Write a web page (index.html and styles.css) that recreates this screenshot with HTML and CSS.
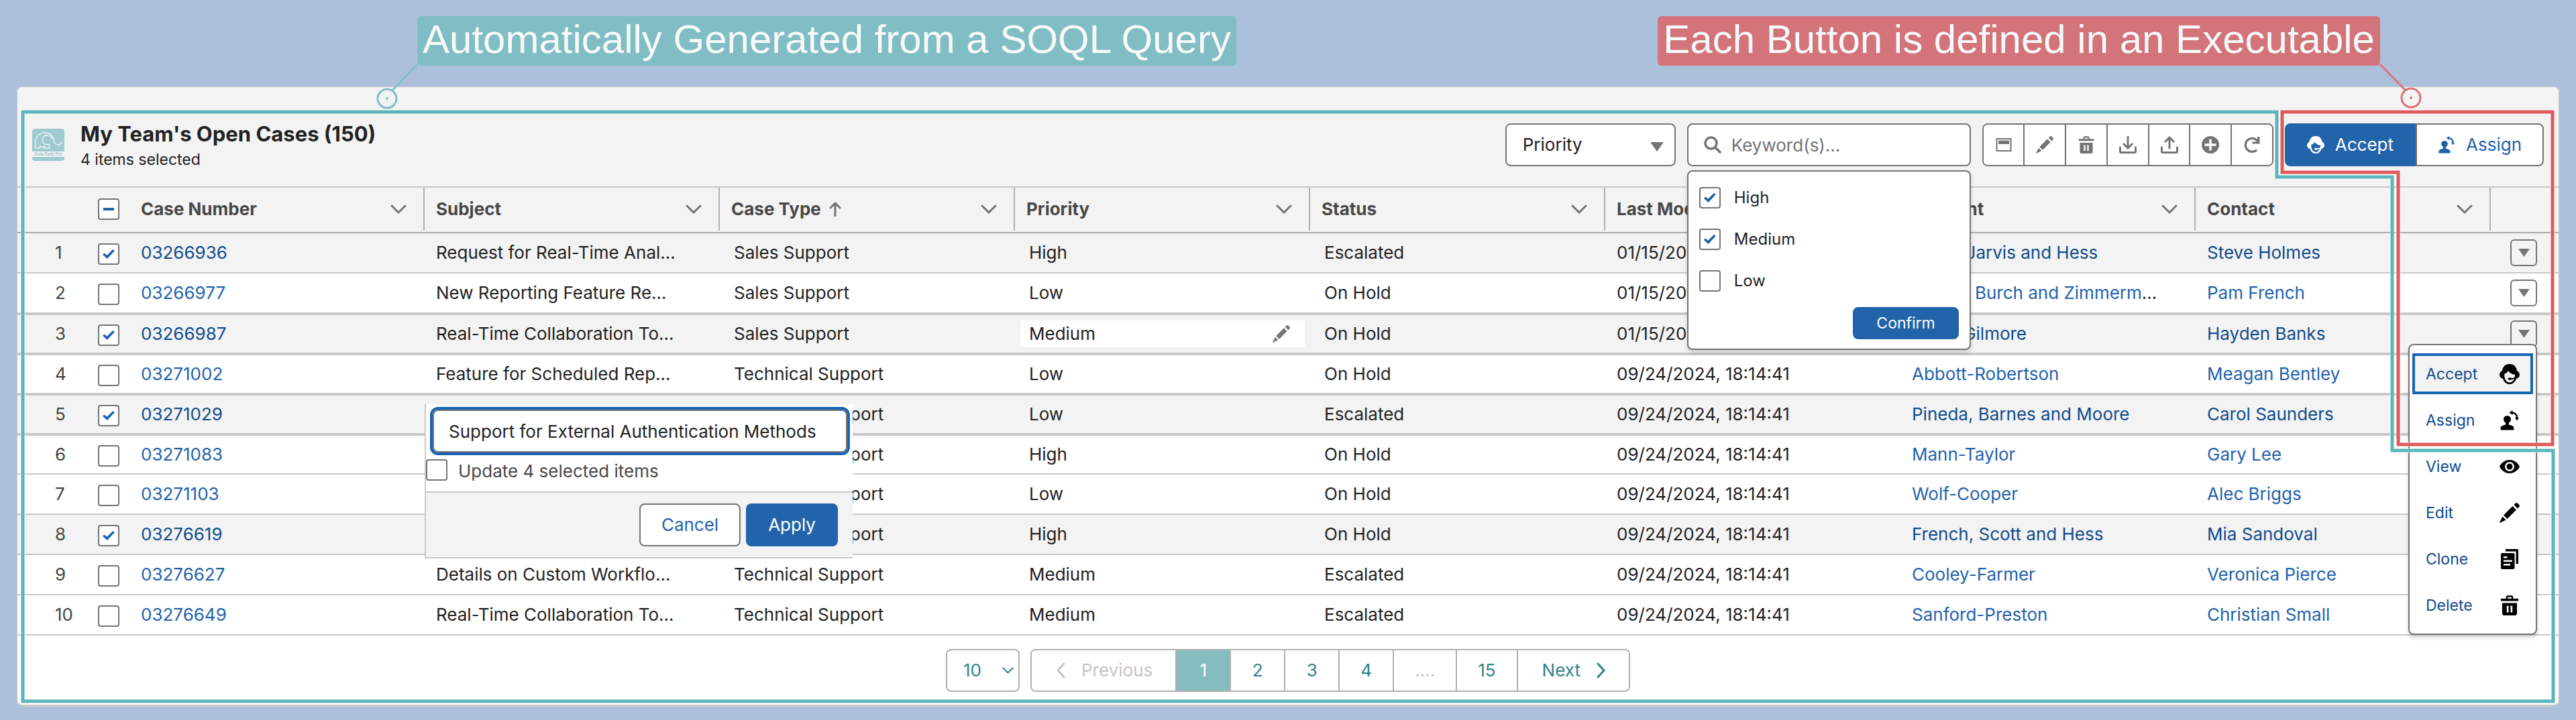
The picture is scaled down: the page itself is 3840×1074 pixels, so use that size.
FILE: index.html
```html
<!DOCTYPE html>
<html lang="en">
<head>
<meta charset="utf-8">
<meta name="viewport" content="width=device-width, initial-scale=1">
<title>My Team's Open Cases</title>
<link rel="stylesheet" href="styles.css">
</head>
<body>
<svg class="sprite" aria-hidden="true">
  <symbol id="i-chevron" viewBox="0 0 24 14"><path d="M2 2l10 10L22 2" fill="none" stroke="currentColor" stroke-width="3" stroke-linecap="round" stroke-linejoin="round"/></symbol>
  <symbol id="i-left" viewBox="0 0 14 24"><path d="M12 2L3 12l9 10" fill="none" stroke="currentColor" stroke-width="3" stroke-linecap="round" stroke-linejoin="round"/></symbol>
  <symbol id="i-right" viewBox="0 0 14 24"><path d="M2 2l9 10-9 10" fill="none" stroke="currentColor" stroke-width="3" stroke-linecap="round" stroke-linejoin="round"/></symbol>
  <symbol id="i-down" viewBox="0 0 20 14"><path d="M0 0h20L10 14z" fill="currentColor"/></symbol>
  <symbol id="i-arrowup" viewBox="0 0 18 22"><path d="M9 21V2M2 9l7-7 7 7" fill="none" stroke="currentColor" stroke-width="3" stroke-linecap="round" stroke-linejoin="round"/></symbol>
  <symbol id="i-search" viewBox="0 0 26 26"><circle cx="10.500" cy="10.500" r="8.500" fill="none" stroke="currentColor" stroke-width="3.500"/><path d="M17 17l7 7" stroke="currentColor" stroke-width="3.500" stroke-linecap="round"/></symbol>
  <symbol id="i-card" viewBox="0 0 26 26"><path d="M2.500 4h21v18h-21z" fill="none" stroke="currentColor" stroke-width="2"/><path d="M5 6.500h16v5.500H5z" fill="currentColor"/></symbol>
  <symbol id="i-pencil" viewBox="0 0 30 30"><path d="M6 18.500L19.500 5l5.500 5.500L11.500 24zM4.500 20.500l5 5L1 29.800q-1.200.2-.8-1zM21.500 3L24 .6q1.400-1.200 2.800 0l2.600 2.600q1.200 1.400 0 2.800L27 8.500z" fill="currentColor"/></symbol>
  <symbol id="i-trash" viewBox="0 0 30 30"><path d="M2 5h26v3.500H2z" fill="currentColor"/><path d="M11 5.500V2.800q0-1.300 1.300-1.300h5.400q1.300 0 1.300 1.300v2.700" fill="none" stroke="currentColor" stroke-width="2.600"/><path fill-rule="evenodd" d="M4 11.500h22V27q0 3-3 3H7q-3 0-3-3zM10.800 15.500v10h2.700v-10zm5.700 0v10h2.700v-10z" fill="currentColor"/></symbol>
  <symbol id="i-download" viewBox="0 0 26 26"><path d="M13 0v17M6 11l7 7 7-7" fill="none" stroke="currentColor" stroke-width="3"/><path d="M1.500 17v6q0 1.500 1.500 1.500h20q1.500 0 1.500-1.500v-6" fill="none" stroke="currentColor" stroke-width="3" stroke-linecap="round"/></symbol>
  <symbol id="i-upload" viewBox="0 0 26 26"><path d="M13 19V2M6 9l7-7 7 7" fill="none" stroke="currentColor" stroke-width="3"/><path d="M1.500 17v6q0 1.500 1.500 1.500h20q1.500 0 1.500-1.500v-6" fill="none" stroke="currentColor" stroke-width="3" stroke-linecap="round"/></symbol>
  <symbol id="i-plus" viewBox="0 0 26 26"><path fill-rule="evenodd" fill="currentColor" d="M13 0a13 13 0 100 26 13 13 0 000-26zM11.200 4.500h3.600v6.700h6.700v3.600h-6.700v6.700h-3.600v-6.700H4.500v-3.600h6.700z"/></symbol>
  <symbol id="i-refresh" viewBox="0 0 26 26"><path d="M19 21.500a10 10 0 11.500-16L22 8" fill="none" stroke="currentColor" stroke-width="3.400" stroke-linecap="round"/><path d="M24.500 1v10.500H13.500V8.500H21V1z" fill="currentColor"/></symbol>
  <symbol id="i-agent" viewBox="0 0 30 30"><path fill-rule="evenodd" fill="currentColor" d="M15 0C8.600 0 4.800 4 4 10 1.500 11 0 13.500 0 16c0 3 2 5.300 5 5.700C6.500 26.500 10 30 15 30s8.500-3.500 10-8.300c3-.4 5-2.700 5-5.700 0-2.500-1.500-5-4-6C25.200 4 21.400 0 15 0zM7.300 14.500c2.700-.5 4.700-2 5.700-4.500 2 3.500 6 5.500 10 5.500.3 6.500-3 12-8 12s-8.300-6-7.700-13z"/><path d="M26 18c-1 2.500-4 3.700-8 4" fill="none" stroke="currentColor" stroke-width="2"/><ellipse cx="15.500" cy="22" rx="3" ry="1.800" fill="currentColor"/></symbol>
  <symbol id="i-assign" viewBox="0 0 30 30"><circle cx="11.500" cy="13.500" r="5.500" fill="currentColor"/><path d="M9 17h5v4.500c4 1 7.500 2 7.500 5.500v1q0 1.500-1.500 1.500H3q-1.500 0-1.500-1.500v-1c0-3.500 3.500-4.500 7.500-5.500zM14.500 3.500L19.500 0v7zM23 11h6l-3 4.500z" fill="currentColor"/><path d="M18.500 3.500c4.500 0 7.500 3 7.500 8" fill="none" stroke="currentColor" stroke-width="2.600"/></symbol>
  <symbol id="i-eye" viewBox="0 0 30 30"><path fill-rule="evenodd" fill="currentColor" d="M15 5C8 5 2.500 9.500 0 15c2.500 5.500 8 10 15 10s12.500-4.500 15-10C27.500 9.500 22 5 15 5zm0 3a7 7 0 110 14 7 7 0 010-14z"/><circle cx="15" cy="15" r="4.500" fill="currentColor"/></symbol>
  <symbol id="i-clone" viewBox="0 0 30 30"><path d="M9 1.700h17.300V22" fill="none" stroke="currentColor" stroke-width="3.400" stroke-linejoin="round"/><path fill-rule="evenodd" fill="currentColor" d="M4 6h16.500q2 0 2 2v20q0 2-2 2H4q-2 0-2-2V8q0-2 2-2zm2 5v2.500h5.500V11zm0 5.500V19h13v-2.500zM6 22v2.500h10V22z"/></symbol>
</svg>

<div class="page">
  <div class="callouts">
    <div class="callout callout--query">Automatically Generated from a SOQL Query
      <svg class="leader leader--left" viewBox="0 0 64 70" aria-hidden="true"><path d="M62 2L24 42"/><circle cx="17" cy="53" r="14"/><circle class="dot" cx="17" cy="53" r="2"/></svg>
    </div>
    <div class="callout callout--action">Each Button is defined in an Executable
      <svg class="leader leader--right" viewBox="0 0 64 70" aria-hidden="true"><path d="M2 2l38 39"/><circle cx="48" cy="52" r="14"/><circle class="dot" cx="48" cy="52" r="2"/></svg>
    </div>
  </div>

  <main class="card">
    <header class="card-head">
      <svg class="logo" viewBox="0 0 48 48" role="img" aria-label="Data Sync Pro"><rect width="48" height="48" rx="4" fill="#9fcbd0"/><rect y="34" width="48" height="8" fill="#f3f3f3"/><path d="M5 24C3 15 9 6 19 6c8 0 12 5 13 11 1 5 4 7 7 7 2 0 4-2 5-5M5 24v5h6l1-3 4 2 2-2v3h8l-1-6c-6 2-10-2-10-6 0-5 4-8 8-7 3 0 5 2 6 4" fill="none" stroke="#fff" stroke-width="1.200"/><text x="24" y="40" class="logo-text">Data Sync Pro</text></svg>
      <div class="heading">
        <h1>My Team's Open Cases (150)</h1>
        <p>4 items selected</p>
      </div>
      <div class="tools">
        <div class="select-wrap">
          <select class="filter-select" aria-label="Filter by"><option>Priority</option></select>
          <svg class="select-arrow"><use href="#i-down"/></svg>
        </div>
        <div class="search">
          <svg class="search-icon"><use href="#i-search"/></svg>
          <input class="search-input" type="search" placeholder="Keyword(s)..." aria-label="Keywords">
          <div class="filter-pop">
            <label class="option"><input class="check" type="checkbox" checked>High</label>
            <label class="option"><input class="check" type="checkbox" checked>Medium</label>
            <label class="option"><input class="check" type="checkbox">Low</label>
            <button class="btn btn--primary btn--small" type="button">Confirm</button>
          </div>
        </div>
        <div class="icon-group">
          <button type="button" aria-label="View"><svg><use href="#i-card"/></svg></button>
          <button type="button" aria-label="Edit"><svg><use href="#i-pencil"/></svg></button>
          <button type="button" aria-label="Delete"><svg><use href="#i-trash"/></svg></button>
          <button type="button" aria-label="Download"><svg><use href="#i-download"/></svg></button>
          <button type="button" aria-label="Upload"><svg><use href="#i-upload"/></svg></button>
          <button type="button" aria-label="Add"><svg><use href="#i-plus"/></svg></button>
          <button type="button" aria-label="Refresh"><svg><use href="#i-refresh"/></svg></button>
        </div>
        <div class="action-group">
          <button class="btn btn--primary" type="button"><svg><use href="#i-agent"/></svg>Accept</button>
          <button class="btn" type="button"><svg><use href="#i-assign"/></svg>Assign</button>
        </div>
      </div>
    </header>

    <table class="cases">
      <colgroup><col class="col-num"><col class="col-check"><col><col><col><col><col><col><col><col><col class="col-actions"></colgroup>
      <thead>
        <tr>
          <th></th>
          <th><div class="th-check"><input class="check check--mixed" type="checkbox" aria-label="Select all"></div></th>
          <th><div class="th-in">Case Number<svg class="chev"><use href="#i-chevron"/></svg></div></th>
          <th><div class="th-in">Subject<svg class="chev"><use href="#i-chevron"/></svg></div></th>
          <th><div class="th-in">Case Type<svg class="sort"><use href="#i-arrowup"/></svg><svg class="chev"><use href="#i-chevron"/></svg></div></th>
          <th><div class="th-in">Priority<svg class="chev"><use href="#i-chevron"/></svg></div></th>
          <th><div class="th-in">Status<svg class="chev"><use href="#i-chevron"/></svg></div></th>
          <th><div class="th-in">Last Modified<svg class="chev"><use href="#i-chevron"/></svg></div></th>
          <th><div class="th-in">Account<svg class="chev"><use href="#i-chevron"/></svg></div></th>
          <th><div class="th-in">Contact<svg class="chev"><use href="#i-chevron"/></svg></div></th>
          <th></th>
        </tr>
      </thead>
      <tbody>
        <tr class="selected">
          <td class="num">1</td><td class="pick"><input class="check" type="checkbox" checked aria-label="Select 03266936"></td>
          <td><a href="#">03266936</a></td><td>Request for Real-Time Anal…</td><td class="in">Sales Support</td><td class="in">High</td><td class="in">Escalated</td><td>01/15/2025</td><td><a href="#">Lowe, Jarvis and Hess</a></td><td><a href="#">Steve Holmes</a></td>
          <td class="act"><button class="row-btn" type="button" aria-label="Row actions"><svg><use href="#i-down"/></svg></button></td>
        </tr>
        <tr>
          <td class="num">2</td><td class="pick"><input class="check" type="checkbox" aria-label="Select 03266977"></td>
          <td><a href="#">03266977</a></td><td>New Reporting Feature Re…</td><td class="in">Sales Support</td><td class="in">Low</td><td class="in">On Hold</td><td>01/15/2025</td><td><a href="#">Moore, Burch and Zimmerm</a>…</td><td><a href="#">Pam French</a></td>
          <td class="act"><button class="row-btn" type="button" aria-label="Row actions"><svg><use href="#i-down"/></svg></button></td>
        </tr>
        <tr class="selected ruled">
          <td class="num">3</td><td class="pick"><input class="check" type="checkbox" checked aria-label="Select 03266987"></td>
          <td><a href="#">03266987</a></td><td>Real-Time Collaboration To…</td><td class="in">Sales Support</td><td class="editing"><div class="editable">Medium<svg><use href="#i-pencil"/></svg></div></td><td class="in">On Hold</td><td>01/15/2025</td><td><a href="#">Ward-Gilmore</a></td><td><a href="#">Hayden Banks</a></td>
          <td class="act">
            <div class="menu-wrap">
              <button class="row-btn" type="button" aria-label="Row actions"><svg><use href="#i-down"/></svg></button>
              <ul class="menu">
                <li><a class="current" href="#">Accept<svg><use href="#i-agent"/></svg></a></li>
                <li><a href="#">Assign<svg><use href="#i-assign"/></svg></a></li>
                <li><a href="#">View<svg><use href="#i-eye"/></svg></a></li>
                <li><a href="#">Edit<svg><use href="#i-pencil"/></svg></a></li>
                <li><a href="#">Clone<svg><use href="#i-clone"/></svg></a></li>
                <li><a href="#">Delete<svg><use href="#i-trash"/></svg></a></li>
              </ul>
            </div>
          </td>
        </tr>
        <tr class="ruled">
          <td class="num">4</td><td class="pick"><input class="check" type="checkbox" aria-label="Select 03271002"></td>
          <td><a href="#">03271002</a></td><td>Feature for Scheduled Rep…</td><td class="in">Technical Support</td><td class="in">Low</td><td class="in">On Hold</td><td>09/24/2024, 18:14:41</td><td><a href="#">Abbott-Robertson</a></td><td><a href="#">Meagan Bentley</a></td><td></td>
        </tr>
        <tr class="selected ruled">
          <td class="num">5</td><td class="pick"><input class="check" type="checkbox" checked aria-label="Select 03271029"></td>
          <td><a href="#">03271029</a></td>
          <td class="host">
            <form class="edit-pop">
              <input class="edit-input" type="text" value="Support for External Authentication Methods" aria-label="Subject">
              <label class="edit-all"><input class="check" type="checkbox">Update 4 selected items</label>
              <div class="edit-foot">
                <button class="btn" type="button">Cancel</button>
                <button class="btn btn--primary" type="button">Apply</button>
              </div>
            </form>
          </td>
          <td class="in">Technical Support</td><td class="in">Low</td><td class="in">Escalated</td><td>09/24/2024, 18:14:41</td><td><a href="#">Pineda, Barnes and Moore</a></td><td><a href="#">Carol Saunders</a></td><td></td>
        </tr>
        <tr class="ruled">
          <td class="num">6</td><td class="pick"><input class="check" type="checkbox" aria-label="Select 03271083"></td>
          <td><a href="#">03271083</a></td><td></td><td class="in">Technical Support</td><td class="in">High</td><td class="in">On Hold</td><td>09/24/2024, 18:14:41</td><td><a href="#">Mann-Taylor</a></td><td><a href="#">Gary Lee</a></td><td></td>
        </tr>
        <tr>
          <td class="num">7</td><td class="pick"><input class="check" type="checkbox" aria-label="Select 03271103"></td>
          <td><a href="#">03271103</a></td><td></td><td class="in">Technical Support</td><td class="in">Low</td><td class="in">On Hold</td><td>09/24/2024, 18:14:41</td><td><a href="#">Wolf-Cooper</a></td><td><a href="#">Alec Briggs</a></td><td></td>
        </tr>
        <tr class="selected">
          <td class="num">8</td><td class="pick"><input class="check" type="checkbox" checked aria-label="Select 03276619"></td>
          <td><a href="#">03276619</a></td><td></td><td class="in">Technical Support</td><td class="in">High</td><td class="in">On Hold</td><td>09/24/2024, 18:14:41</td><td><a href="#">French, Scott and Hess</a></td><td><a href="#">Mia Sandoval</a></td><td></td>
        </tr>
        <tr>
          <td class="num">9</td><td class="pick"><input class="check" type="checkbox" aria-label="Select 03276627"></td>
          <td><a href="#">03276627</a></td><td>Details on Custom Workflo…</td><td class="in">Technical Support</td><td class="in">Medium</td><td class="in">Escalated</td><td>09/24/2024, 18:14:41</td><td><a href="#">Cooley-Farmer</a></td><td><a href="#">Veronica Pierce</a></td><td></td>
        </tr>
        <tr>
          <td class="num">10</td><td class="pick"><input class="check" type="checkbox" aria-label="Select 03276649"></td>
          <td><a href="#">03276649</a></td><td>Real-Time Collaboration To…</td><td class="in">Technical Support</td><td class="in">Medium</td><td class="in">Escalated</td><td>09/24/2024, 18:14:41</td><td><a href="#">Sanford-Preston</a></td><td><a href="#">Christian Small</a></td><td></td>
        </tr>
      </tbody>
    </table>

    <nav class="pager" aria-label="Pages">
      <div class="size-wrap">
        <select class="size-select" aria-label="Rows per page"><option>10</option></select>
        <svg class="size-arrow"><use href="#i-chevron"/></svg>
      </div>
      <div class="pages">
        <button class="step" type="button" disabled><svg><use href="#i-left"/></svg>Previous</button>
        <button class="on" type="button" aria-current="page">1</button>
        <button type="button">2</button>
        <button type="button">3</button>
        <button type="button">4</button>
        <button type="button" disabled>....</button>
        <button type="button">15</button>
        <button class="step" type="button">Next<svg><use href="#i-right"/></svg></button>
      </div>
    </nav>
  </main>

  <svg class="outlines" viewBox="0 0 3840 1074" preserveAspectRatio="none" aria-hidden="true">
    <path class="halo" d="M34 167H3394V264H3566V672H3806V1046H34z"/>
    <path class="halo" d="M3402 167H3805V663H3575V257H3402z"/>
    <path class="outline-query" d="M34 167H3394V264H3566V672H3806V1046H34z"/>
    <path class="outline-action" d="M3402 167H3805V663H3575V257H3402z"/>
  </svg>
</div>
</body>
</html>
```
FILE: styles.css
```css
* { box-sizing: border-box; }

body {
  margin: 0;
  background: #adc0db;
  color: #222;
  font-family: Inter, "Liberation Sans", sans-serif;
  font-size: 26px;
  line-height: 36px;
}

button, input, select { font: inherit; color: inherit; margin: 0; }
button { cursor: pointer; }
a { color: #1f62ad; text-decoration: none; }
.sprite { position: absolute; width: 0; height: 0; }

.page {
  position: relative;
  display: flex;
  flex-direction: column;
  min-height: 100vh;
  padding: 0 25px 20px;
}

/* Callouts above the card */
.callouts {
  display: flex;
  justify-content: space-between;
  align-items: flex-start;
  min-height: 129px;
  padding: 24px 267px 0 597px;
}
.callout {
  position: relative;
  padding: 0 8px 4px;
  border-radius: 6px;
  color: #f8fafa;
  font-family: "Liberation Sans", Arial, sans-serif;
  font-size: 60px;
  line-height: 70px;
  white-space: nowrap;
}
.callout--query { background: #81bdc5; }
.callout--action { background: #d3737a; }
.leader {
  position: absolute;
  top: 100%;
  z-index: 6;
  width: 64px;
  height: 70px;
  margin-top: -4px;
  fill: none;
  stroke-width: 3;
}
.leader--left { right: 100%; margin-right: -2px; stroke: #81bdc5; }
.leader--right { left: 100%; margin-left: -2px; stroke: #dc7278; }
.leader--left .dot { fill: #81bdc5; stroke: none; }
.leader--right .dot { fill: #dc7278; stroke: none; }

/* Card */
.card {
  flex: 1;
  border: 1px solid #c9c9c9;
  border-bottom-width: 3px;
  border-radius: 8px;
  background: #fff;
}
.card-head {
  display: flex;
  align-items: flex-start;
  gap: 24px;
  padding: 54px 22px 18px;
  border-bottom: 2px solid #c9c9c9;
  border-radius: 8px 8px 0 0;
  background: #f3f3f3;
}
.logo { width: 48px; height: 48px; margin-top: 8px; }
.logo-text {
  fill: #8fc0c6;
  font-size: 6px;
  font-weight: 600;
  text-anchor: middle;
}
.heading h1 { margin: 0; font-size: 31px; line-height: 32px; font-weight: 700; }
.heading p { margin: 0; font-size: 23px; line-height: 44px; }

.tools { display: flex; gap: 17px; margin-left: auto; }

.select-wrap, .size-wrap { position: relative; }
.filter-select {
  width: 254px;
  height: 64px;
  padding: 0 24px;
  border: 2px solid #747474;
  border-radius: 8px;
  background: #fff;
  appearance: none;
}
.select-arrow {
  position: absolute;
  top: 28px;
  right: 18px;
  width: 20px;
  height: 14px;
  color: #747474;
  pointer-events: none;
}

.search { position: relative; width: 423px; }
.search-input {
  width: 100%;
  height: 64px;
  padding: 0 16px 0 64px;
  border: 2px solid #747474;
  border-radius: 8px;
  background: #fff;
  appearance: none;
}
.search-input::placeholder { color: #747474; opacity: 1; }
.search-icon {
  position: absolute;
  top: 19px;
  left: 25px;
  width: 26px;
  height: 26px;
  color: #747474;
}

.filter-pop {
  position: absolute;
  top: 70px;
  left: 0;
  z-index: 4;
  display: flex;
  flex-direction: column;
  width: 100%;
  padding: 8px 16px 14px;
  border: 2px solid #747474;
  border-radius: 8px;
  background: #fff;
  box-shadow: 0 4px 6px rgba(0, 0, 0, .16);
}
.option {
  display: flex;
  align-items: center;
  gap: 20px;
  height: 62px;
  font-size: 24px;
}
.filter-pop .btn { align-self: flex-end; margin-top: 8px; }

.check {
  display: grid;
  place-content: center;
  flex: none;
  width: 32px;
  height: 32px;
  border: 2px solid #747474;
  border-radius: 4px;
  background: #fff;
  appearance: none;
}
.check:checked::before {
  content: "";
  width: 18px;
  height: 14px;
  background: #1f62ad;
  clip-path: polygon(0 56%, 14% 40%, 36% 62%, 84% 0, 100% 14%, 38% 100%);
}
.check--mixed::before {
  content: "";
  width: 16px;
  height: 4px;
  background: #1f62ad;
}

.icon-group, .pages {
  display: flex;
  height: 64px;
  border: 2px solid #747474;
  border-radius: 8px;
  background: #fff;
  overflow: hidden;
}
.icon-group { width: 434px; }
.icon-group button {
  display: grid;
  flex: 1;
  place-items: center;
  padding: 0;
  border: 0;
  background: #fff;
  color: #747474;
}
.icon-group button + button { border-left: 2px solid #747474; }
.icon-group svg { width: 26px; height: 26px; }

.btn {
  display: inline-flex;
  align-items: center;
  justify-content: center;
  gap: 16px;
  height: 64px;
  padding: 0 31px;
  border: 2px solid #747474;
  border-radius: 8px;
  background: #fff;
  color: #1f62ad;
}
.btn svg { width: 26px; height: 26px; }
.btn--primary { border-color: #2264a9; background: #2264a9; color: #fff; }
.btn--small { height: 48px; padding: 0 33px; font-size: 23px; }
.action-group { display: flex; }
.action-group .btn:first-child { border-radius: 8px 0 0 8px; }
.action-group .btn:last-child { border-radius: 0 8px 8px 0; }

/* Case table */
.cases {
  width: 100%;
  border-collapse: separate;
  border-spacing: 0;
  table-layout: fixed;
}
.col-num { width: 111px; }
.col-check { width: 56px; }
.col-actions { width: 101px; }

th {
  height: 68px;
  padding: 0 0 2px;
  border-bottom: 2px solid #aaa;
  background: #f3f3f3;
  color: #484848;
  font-weight: 700;
  text-align: left;
}
.th-in {
  display: flex;
  align-items: center;
  height: 64px;
  padding: 0 25px 0 17px;
  border-right: 2px solid #b0b0b0;
  white-space: nowrap;
}
.th-check {
  display: flex;
  align-items: center;
  height: 64px;
  padding-left: 9px;
}
.chev { width: 24px; height: 14px; margin-left: auto; color: #747474; }
.sort { width: 18px; height: 22px; margin-left: 12px; color: #747474; }

td {
  height: 60px;
  padding: 0 17px;
  border-bottom: 2px solid #c9c9c9;
  white-space: nowrap;
}
.ruled td { border-top: 2px solid #c9c9c9; }
.selected td { background: #f3f3f3; }
.selected a { color: #0f4b8d; }
td.num { padding: 0 0 0 56px; color: #444; }
td.pick { padding: 4px 0 0 9px; }
td.in { padding-left: 21px; }
td.editing { padding: 0 8px; }
.editable {
  display: flex;
  align-items: center;
  justify-content: space-between;
  height: 40px;
  padding: 0 22px 0 13px;
  background: #fff;
}
.editable svg { width: 26px; height: 26px; color: #747474; }
td.act { padding: 0 29px; }
.row-btn {
  display: grid;
  place-items: center;
  width: 40px;
  height: 40px;
  padding: 0;
  border: 2px solid #747474;
  border-radius: 6px;
  background: transparent;
  color: #747474;
}
.row-btn svg { width: 17px; height: 12px; }
.act { padding-left: 31px; }

/* Row action menu */
.menu-wrap { position: relative; width: 40px; }
.menu {
  position: absolute;
  top: 35px;
  right: 0;
  z-index: 4;
  width: 192px;
  margin: 0;
  padding: 8px 4px;
  border: 2px solid #747474;
  border-radius: 8px;
  background: #fff;
  box-shadow: 0 4px 6px rgba(0, 0, 0, .16);
  font-size: 23px;
  list-style: none;
}
.menu li { padding: 4px 0; }
.menu a {
  display: flex;
  align-items: center;
  justify-content: space-between;
  height: 61px;
  padding: 0 20px;
  color: #0f4b8d;
}
.menu .current { background: #f3f3f3; box-shadow: inset 0 0 0 4px #1765b5; }
.menu svg { width: 30px; height: 30px; color: #000; }

/* Inline editor */
td.host { position: relative; }
.edit-pop {
  position: absolute;
  top: 13px;
  left: 0;
  z-index: 3;
  width: 145%;
  padding-top: 8px;
  border-bottom: 2px solid #c9c9c9;
  border-left: 2px solid #c9c9c9;
  background: #fff;
}
.edit-input {
  display: block;
  width: calc(100% - 18px);
  height: 64px;
  margin: 0 8px 10px 10px;
  padding: 0 22px;
  border: 2px solid #747474;
  border-radius: 8px;
  background: #fff;
  outline: 4px solid #1765b5;
}
.edit-all { display: flex; gap: 16px; height: 48px; color: #484848; }
.edit-foot {
  display: flex;
  justify-content: flex-end;
  gap: 8px;
  padding: 16px 22px;
  border-top: 2px solid #c9c9c9;
  background: #f3f3f3;
}

/* Pagination */
.pager {
  display: flex;
  justify-content: center;
  gap: 16px;
  padding: 20px 0 16px;
  color: #2e8488;
}
.size-select {
  width: 110px;
  height: 64px;
  padding: 0 24px;
  border: 2px solid #b0b0b0;
  border-radius: 8px;
  background: #fff;
  appearance: none;
}
.size-arrow {
  position: absolute;
  top: 27px;
  right: 9px;
  width: 17px;
  height: 10px;
  pointer-events: none;
}
.pages { border-color: #b0b0b0; }
.pages button {
  min-width: 81px;
  padding: 0 31px;
  border: 0;
  background: #fff;
}
.pages button + button { border-left: 2px solid #b0b0b0; }
.pages .on { background: #85bcbe; color: #fff; }
.pages button:disabled { color: #c4c4c4; }
.pages .step { display: flex; align-items: center; gap: 24px; padding: 0 34px 0 36px; }
.pages svg { width: 14px; height: 24px; }

/* Region outlines over the card */
.outlines {
  position: absolute;
  inset: 0;
  z-index: 5;
  width: 100%;
  height: 100%;
  fill: none;
  pointer-events: none;
}
.outlines path { vector-effect: non-scaling-stroke; }
.halo { stroke: rgba(255, 255, 255, .6); stroke-width: 7; }
.outline-query { stroke: #5ab6ba; stroke-width: 5; }
.outline-action { stroke: #de5a5d; stroke-width: 5; }
```
